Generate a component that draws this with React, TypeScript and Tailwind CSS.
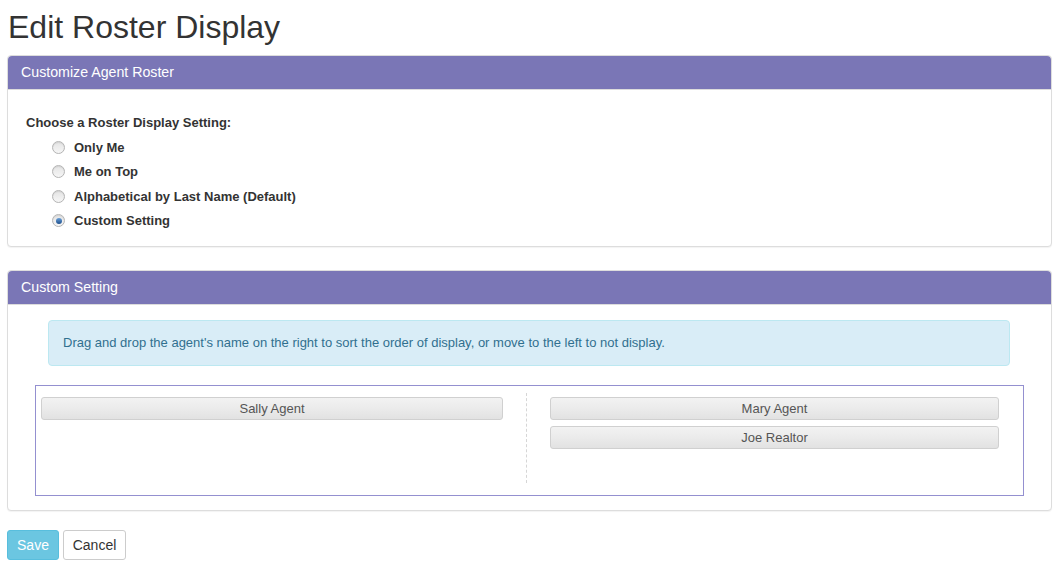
import React from 'react';

const options = [
  { label: 'Only Me', checked: false },
  { label: 'Me on Top', checked: false },
  { label: 'Alphabetical by Last Name (Default)', checked: false },
  { label: 'Custom Setting', checked: true },
];

function Radio({ checked }: { checked: boolean }) {
  return (
    <span className="flex h-[13px] w-[13px] items-center justify-center rounded-full border border-[#b4b4b4] bg-gradient-to-b from-[#e4e4e4] to-[#f6f6f6] shadow-[inset_0_1px_1px_rgba(0,0,0,0.08)]">
      {checked && (
        <span className="h-[6px] w-[6px] rounded-full bg-gradient-to-b from-[#6aa0d8] to-[#1d4f8c]" />
      )}
    </span>
  );
}

function Item({ name }: { name: string }) {
  return (
    <div className="mb-[6px] h-[23px] rounded-[3px] border border-[#d0d0d0] bg-gradient-to-b from-[#f2f2f2] via-[#ebebeb] to-[#e2e2e2] text-center text-[13px] leading-[21px] text-[#555]">
      {name}
    </div>
  );
}

function PanelHeading({ title }: { title: string }) {
  return (
    <div className="h-[34px] rounded-t-[4px] border-b border-[#dcdcdc] bg-[#7a76b6] px-[13px] text-[14.2px] leading-[33px] text-white">
      {title}
    </div>
  );
}

export default function App() {
  return (
    <div className="min-h-[575px] bg-white pl-[7px] pr-[6px] font-[family-name:Liberation_Sans,Arial,sans-serif] text-[#333]">
      <h1 className="pl-[1px] pt-[9px] text-[32px] leading-[36px]">Edit Roster Display</h1>

      <div className="mt-[10px] rounded-[4px] border border-[#ddd] bg-white shadow-[0_1px_1px_rgba(0,0,0,0.05)]">
        <PanelHeading title="Customize Agent Roster" />
        <div className="px-[18px] pb-[13px] pt-[24px] text-[13px]">
          <div className="font-bold leading-[18px]">Choose a Roster Display Setting:</div>
          <div className="mt-[3px] pl-[26px]">
            {options.map((o) => (
              <div key={o.label} className="flex h-[24.5px] items-center">
                <Radio checked={o.checked} />
                <span className="ml-[9px] font-bold">{o.label}</span>
              </div>
            ))}
          </div>
        </div>
      </div>

      <div className="mt-[23px] rounded-[4px] border border-[#ddd] bg-white shadow-[0_1px_1px_rgba(0,0,0,0.05)]">
        <PanelHeading title="Custom Setting" />
        <div className="pb-[14px] pt-[15px]">
          <div className="ml-[40px] mr-[41px] rounded-[4px] border border-[#bce8f1] bg-[#d9edf7] px-[14px] py-[14px] text-[13px] leading-[16px] text-[#31708f]">
            Drag and drop the agent's name on the right to sort the order of display, or move to the left to not display.
          </div>
          <div className="ml-[27px] mr-[27px] mt-[19px] border border-[#9490d0]">
            <div className="grid grid-cols-[490px_1fr] pb-[12px] pt-[7px]">
              <div className="min-h-[90px] pl-[5px] pr-[23px] pt-[4px]">
                <Item name="Sally Agent" />
              </div>
              <div className="min-h-[90px] border-l border-dashed border-[#d6d6d6] pl-[23px] pr-[24px] pt-[4px]">
                <Item name="Mary Agent" />
                <Item name="Joe Realtor" />
              </div>
            </div>
          </div>
        </div>
      </div>

      <div className="mt-[19px] flex gap-[4px]">
        <button className="h-[30px] w-[52px] rounded-[3px] border border-[#46b8da] bg-[#5bc0de] text-[14px] text-white opacity-90">
          Save
        </button>
        <button className="h-[30px] w-[63px] rounded-[3px] border border-[#ccc] bg-white text-[14px] text-[#333]">
          Cancel
        </button>
      </div>
    </div>
  );
}
